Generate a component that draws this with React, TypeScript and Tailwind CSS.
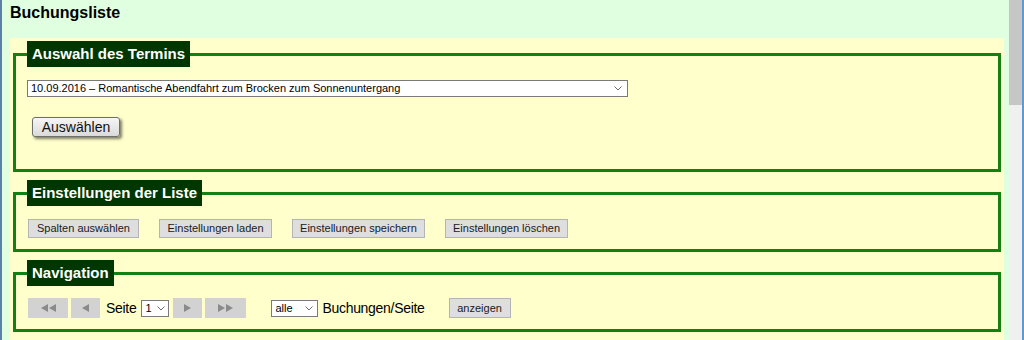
import React from "react";

const small = "font-['Liberation_Sans',Arial,sans-serif] text-[11px]";

function Chevron() {
  return (
    <svg width="8" height="5" viewBox="0 0 8 5" className="shrink-0">
      <polyline points="0.5,0.5 4,4 7.5,0.5" fill="none" stroke="#6d6d6d" strokeWidth="1" />
    </svg>
  );
}

function Tri({ dir }: { dir: "l" | "r" }) {
  return (
    <svg width="7" height="8" viewBox="0 0 7 8">
      {dir === "l" ? (
        <polygon points="7,0 7,8 0,4" fill="#8a8a8a" />
      ) : (
        <polygon points="0,0 0,8 7,4" fill="#8a8a8a" />
      )}
    </svg>
  );
}

function Fieldset({ title, children }: { title: string; children: React.ReactNode }) {
  return (
    <fieldset className="border-[3px] border-solid border-[#128012] pl-[11px] pr-[11px]">
      <legend className="h-[26px] bg-[#003600] px-[5px] font-['Liberation_Sans',Arial,sans-serif] text-[15px] font-bold leading-[26px] text-white">
        {title}
      </legend>
      {children}
    </fieldset>
  );
}

function GrayBtn({ label, w, h = "h-[19px]" }: { label: string; w: string; h?: string }) {
  return (
    <button
      className={`${small} ${w} ${h} flex items-center justify-center border border-solid border-[#b4b4b4] bg-[#dedede] text-[#1a1a1a]`}
    >
      {label}
    </button>
  );
}

function NavBtn({ children, w }: { children: React.ReactNode; w: string }) {
  return (
    <div className={`${w} flex h-[20px] items-center justify-center gap-[1px] bg-[#d2d2d2]`}>{children}</div>
  );
}

export default function App() {
  return (
    <div className="flex h-[340px] w-[1024px] overflow-hidden bg-[#e0ffe0] text-black">
      <div className="w-[2px] shrink-0 bg-[#5d80a8]" />
      <div className="flex w-[1007px] shrink-0 flex-col">
        <h1 className="h-[38px] pl-[8px] pt-[4px] font-['Liberation_Sans',Arial,sans-serif] text-[16px] font-bold leading-[18px]">
          Buchungsliste
        </h1>
        <div className="ml-[8px] mr-[5px] flex flex-1 flex-col gap-[8px] bg-[#ffffcc] px-[3px] pt-[3px]">
          <Fieldset title="Auswahl des Termins">
            <div className="pt-[13px] pb-[32px]">
              <div
                className={`${small} flex h-[17px] w-[601px] items-center justify-between border border-solid border-[#7a7a7a] bg-white pl-[3px] pr-[5px] leading-[15px]`}
              >
                <span>10.09.2016 – Romantische Abendfahrt zum Brocken zum Sonnenuntergang</span>
                <Chevron />
              </div>
              <div className="mt-[20px] pl-[5px]">
                <button className="flex h-[20px] w-[88px] items-center justify-center rounded-[3px] border border-solid border-[#6e6e6e] bg-gradient-to-b from-[#f6f6f6] to-[#dadada] font-['Liberation_Sans',Arial,sans-serif] text-[14px] leading-[16px] text-[#111] shadow-[2px_2px_3px_rgba(0,0,0,0.5)]">
                  Auswählen
                </button>
              </div>
            </div>
          </Fieldset>
          <Fieldset title="Einstellungen der Liste">
            <div className="flex gap-[20px] pl-[1px] pt-[13px] pb-[11px]">
              <GrayBtn label="Spalten auswählen" w="w-[111px]" />
              <GrayBtn label="Einstellungen laden" w="w-[113px]" />
              <GrayBtn label="Einstellungen speichern" w="w-[133px]" />
              <GrayBtn label="Einstellungen löschen" w="w-[123px]" />
            </div>
          </Fieldset>
          <Fieldset title="Navigation">
            <div className="flex items-center pl-[1px] pt-[12px] pb-[11px] font-['Liberation_Sans',Arial,sans-serif] text-[14px] tracking-[-0.3px]">
              <NavBtn w="w-[40px]">
                <Tri dir="l" />
                <Tri dir="l" />
              </NavBtn>
              <div className="ml-[3px]">
                <NavBtn w="w-[29px]">
                  <Tri dir="l" />
                </NavBtn>
              </div>
              <span className="ml-[6px] leading-[20px]">Seite</span>
              <div
                className={`${small} ml-[5px] flex h-[17px] w-[28px] items-center justify-between border border-solid border-[#7a7a7a] bg-white pl-[3px] pr-[3px] tracking-normal`}
              >
                <span>1</span>
                <Chevron />
              </div>
              <div className="ml-[4px]">
                <NavBtn w="w-[29px]">
                  <Tri dir="r" />
                </NavBtn>
              </div>
              <div className="ml-[3px]">
                <NavBtn w="w-[41px]">
                  <Tri dir="r" />
                  <Tri dir="r" />
                </NavBtn>
              </div>
              <div
                className={`${small} ml-[25px] flex h-[17px] w-[47px] items-center justify-between border border-solid border-[#7a7a7a] bg-white pl-[3px] pr-[4px] tracking-normal`}
              >
                <span>alle</span>
                <Chevron />
              </div>
              <span className="ml-[4px] leading-[20px]">Buchungen/Seite</span>
              <div className="ml-[24px] tracking-normal">
                <GrayBtn label="anzeigen" w="w-[62px]" h="h-[20px]" />
              </div>
            </div>
          </Fieldset>
        </div>
      </div>
      <div className="flex w-[13px] shrink-0 flex-col bg-[#f0f0f0]">
        <div className="h-[105px] bg-[#c6c6c6]" />
      </div>
      <div className="w-[2px] shrink-0 bg-[#5b9bd5]" />
    </div>
  );
}
